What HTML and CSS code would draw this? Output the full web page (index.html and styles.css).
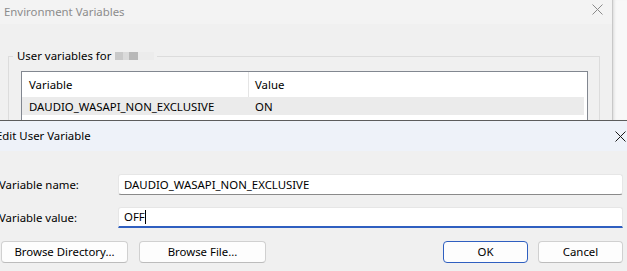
FILE: index.html
```html
<!DOCTYPE html>
<html>
<head>
<meta charset="utf-8">
<link rel="stylesheet" href="styles.css">
</head>
<body>
<div class="screen">
  <div class="envwin">
    <div class="env-frame">
      <div class="env-title">
        <span class="env-title-text">Environment Variables</span>
        <svg class="env-close" width="11" height="11" viewBox="0 0 11 11"><path d="M0.5 0.5 L10.5 10.5 M10.5 0.5 L0.5 10.5" stroke="#8a8a8a" stroke-width="1" fill="none"/></svg>
      </div>
      <div class="env-body">
        <fieldset class="group">
          <legend class="group-legend">User variables for <span class="blur"><i></i><i></i><i></i><i></i></span></legend>
          <div class="list">
            <div class="list-row list-head">
              <div class="col1">Variable</div>
              <div class="col2">Value</div>
            </div>
            <div class="list-row list-sel">
              <div class="col1">DAUDIO_WASAPI_NON_EXCLUSIVE</div>
              <div class="col2">ON</div>
            </div>
          </div>
        </fieldset>
      </div>
    </div>
    <div class="env-outside"></div>
  </div>
  <div class="dialog">
    <div class="dlg-title">
      <span class="dlg-title-text">Edit User Variable</span>
      <svg class="dlg-close" width="11" height="11" viewBox="0 0 11 11"><path d="M0.5 0.5 L10.5 10.5 M10.5 0.5 L0.5 10.5" stroke="#1a1a1a" stroke-width="1" fill="none"/></svg>
    </div>
    <div class="dlg-body">
      <div class="field">
        <label class="field-label">Variable name:</label>
        <div class="input">DAUDIO_WASAPI_NON_EXCLUSIVE</div>
      </div>
      <div class="field">
        <label class="field-label">Variable value:</label>
        <div class="input input-focus">OFF<span class="caret"></span></div>
      </div>
      <div class="buttons">
        <div class="btn">Browse Directory...</div>
        <div class="btn">Browse File...</div>
        <div class="spacer"></div>
        <div class="btn btn-default">OK</div>
        <div class="btn">Cancel</div>
      </div>
    </div>
  </div>
</div>
</body>
</html>
```
FILE: styles.css
```css
html, body {
  margin: 0;
  padding: 0;
  background: #f0f0f0;
}
body {
  width: 627px;
  height: 271px;
  overflow: hidden;
  font-family: "Noto Sans", "Open Sans", sans-serif;
  font-size: 11.4px;
  color: #000;
}
.screen {
  width: 627px;
  height: 271px;
  overflow: hidden;
}
.envwin {
  display: flex;
  height: 120px;
  overflow: hidden;
}
.env-frame {
  width: 612px;
  border-right: 1px solid #c8c8c8;
  background: #f0f0f0;
  flex: none;
}
.env-outside {
  flex: 1;
  background: #f8f8f8;
  box-shadow: inset 3px 0 3px -2px rgba(0,0,0,0.12);
}
.env-title {
  height: 24px;
  background: #f3f3f3;
  display: flex;
  align-items: center;
  padding: 0 9px 0 4px;
}
.env-title-text {
  color: #8c8c8c;
  flex: 1;
  line-height: 16px;
}
.env-close {
  display: block;
  margin-top: -5px;
}
.env-body {
  padding: 25px 12px 0 8px;
}
.group {
  margin: 0;
  border: 1px solid #dcdcdc;
  border-bottom: none;
  padding: 8px 11px 0 12px;
  height: 80px;
}
.group-legend {
  padding: 0 3px 0 4px;
  margin-left: -8px;
  line-height: 14px;
  display: flex;
  align-items: center;
}
.blur {
  display: inline-flex;
  margin-left: 4px;
  height: 8px;
  align-items: center;
}
.blur i {
  display: block;
  width: 8px;
  height: 8px;
  background: #c9c9c9;
}
.blur i:nth-child(2) { background: #dadada; width: 6px; }
.blur i:nth-child(3) { background: #b8b8b8; width: 9px; }
.blur i:nth-child(4) { background: #ececec; width: 16px; }
.list {
  background: #fff;
  border: 1px solid #828790;
  border-bottom: none;
  height: 60px;
  padding-right: 2px;
}
.list-row {
  display: flex;
  height: 25px;
  align-items: center;
}
.list-head {
  height: 25px;
}
.list-sel {
  background: #ebebeb;
  height: 18px;
  margin-right: 1px;
}
.col1 {
  box-sizing: border-box;
  width: 227px;
  padding-left: 7px;
  align-self: stretch;
  display: flex;
  align-items: center;
}
.list-head .col1 {
  border-right: 1px solid #e5e5e5;
}
.col2 {
  padding-left: 6px;
}

.dialog {
  margin-left: -9px;
  width: 640px;
  border-top: 1px solid #5c5c5c;
  background: #f0f0f0;
}
.dlg-title {
  height: 30px;
  background: #eef2f9;
  display: flex;
  align-items: center;
  padding-left: 5px;
}
.dlg-title-text {
  flex: 1;
  color: #000;
  line-height: 16px;
}
.dlg-close {
  display: block;
  margin-right: 5px;
}
.dlg-body {
  padding: 23px 0 0 9px;
}
.field {
  display: flex;
  align-items: center;
  height: 21px;
  margin-bottom: 12px;
}
.field-label {
  width: 118px;
  flex: none;
  margin-left: -1px;
  padding-right: 1px;
}
.input {
  width: 505px;
  height: 21px;
  box-sizing: border-box;
  background: #fff;
  border: 1px solid #e6e6e6;
  border-bottom: 1px solid #8a8a8a;
  border-radius: 3px;
  padding-left: 5px;
  display: flex;
  align-items: center;
  line-height: 16px;
}
.input-focus {
  border-bottom: 2px solid #2f5fc0;
  border-radius: 3px 3px 0 0;
}
.caret {
  display: inline-block;
  width: 1px;
  height: 14px;
  background: #000;
  margin-left: 0;
}
.buttons {
  display: flex;
  margin-top: 13px;
  gap: 11px;
  width: 623px;
}
.spacer {
  flex: 1;
}
.btn {
  width: 127px;
  height: 22px;
  box-sizing: border-box;
  background: #fdfdfd;
  border: 1px solid #d0d0d0;
  border-bottom-color: #bcbcbc;
  border-radius: 4px;
  display: flex;
  align-items: center;
  justify-content: center;
  line-height: 16px;
}
.btn:first-child {
  margin-left: 1px;
}
.btn-default {
  width: 85px;
  border: 1px solid #2f5fc0;
  margin-right: -1px;
}
.btn-default + .btn {
  width: 85px;
}
```
